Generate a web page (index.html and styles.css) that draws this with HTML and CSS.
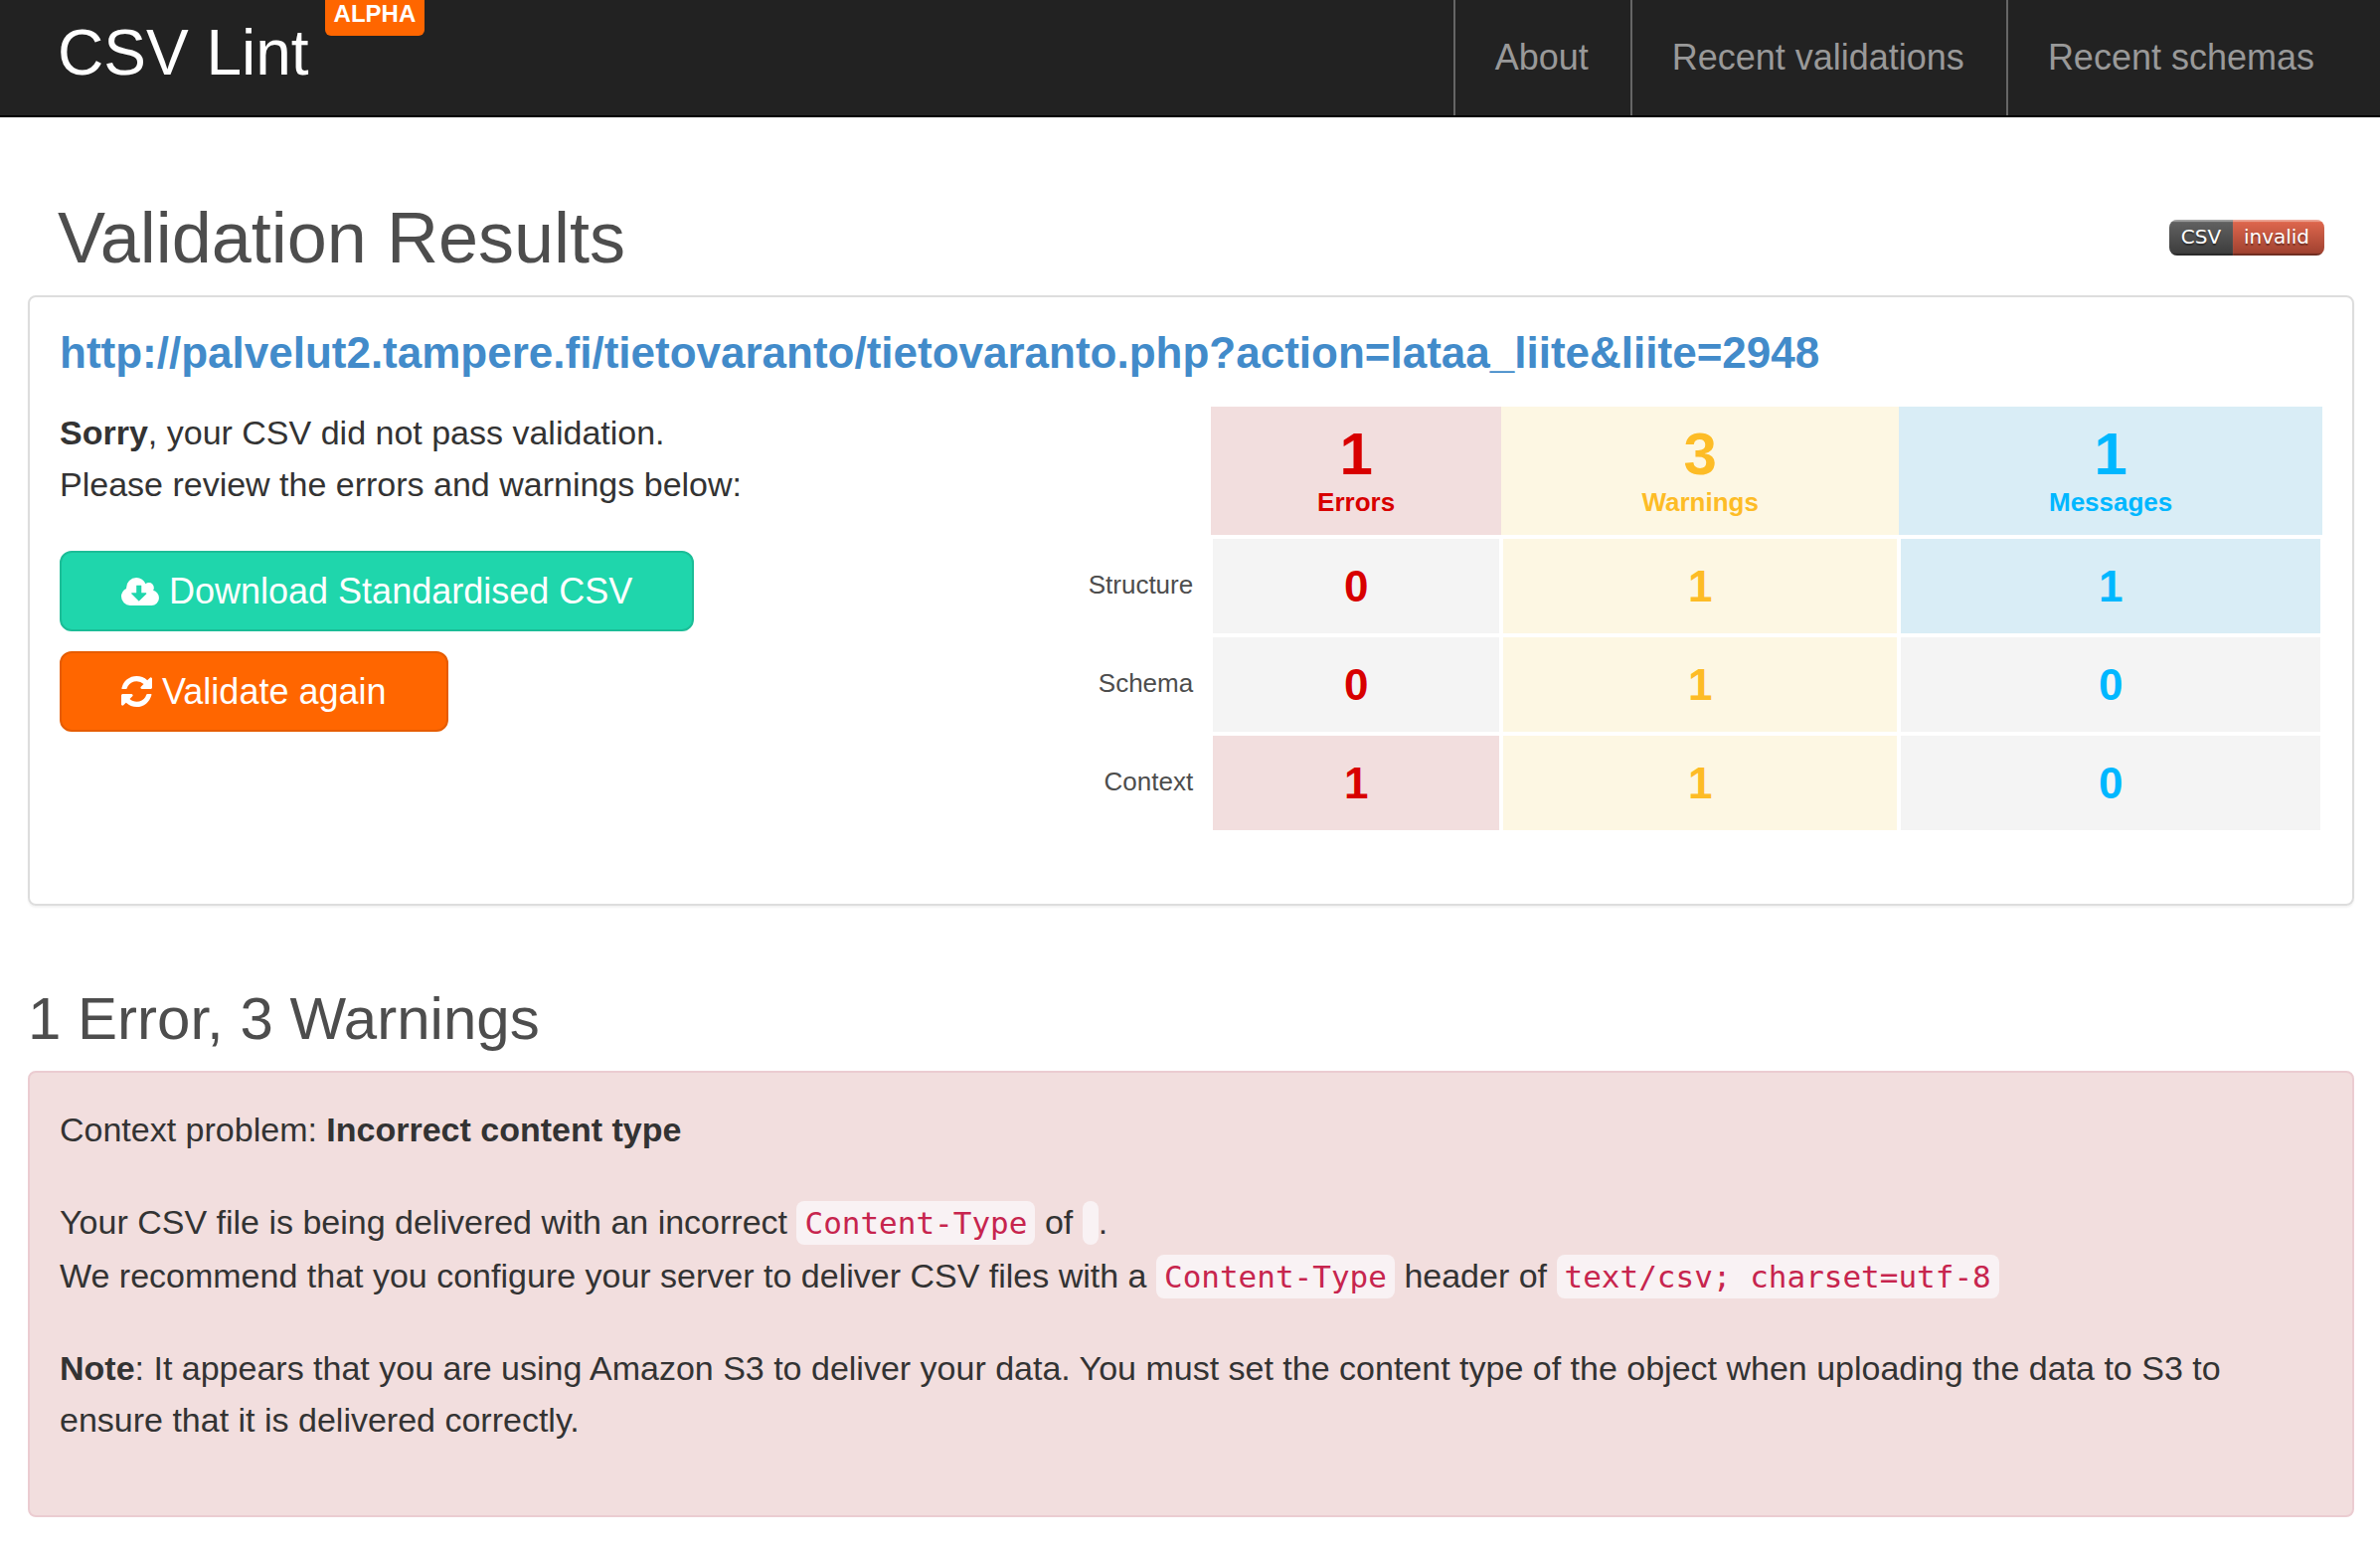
FILE: index.html
```html
<!DOCTYPE html>
<html lang="en">
<head>
<meta charset="utf-8">
<title>CSV Lint - Validation Results</title>
<link rel="stylesheet" href="styles.css">
</head>
<body>
<header class="navbar">
  <div class="brand">
    <a class="brand-name" href="#">CSV Lint</a>
    <span class="brand-tag">ALPHA</span>
  </div>
  <nav class="nav">
    <a class="nav-link" href="#">About</a>
    <a class="nav-link" href="#">Recent validations</a>
    <a class="nav-link" href="#">Recent schemas</a>
  </nav>
</header>

<main class="container">
  <div class="page-head">
    <h1 class="page-title">Validation Results</h1>
    <a class="status" href="#"><span class="status-key">CSV</span><span class="status-value">invalid</span></a>
  </div>

  <section class="panel">
    <h2 class="source"><a href="#">http://palvelut2.tampere.fi/tietovaranto/tietovaranto.php?action=lataa_liite&amp;liite=2948</a></h2>
    <div class="overview">
      <div>
        <p class="text"><strong>Sorry</strong>, your CSV did not pass validation.<br>Please review the errors and warnings below:</p>
        <div class="actions">
          <button class="btn btn-download" type="button">
            <svg class="icon-cloud" viewBox="0 0 1920 1408" aria-hidden="true"><path transform="matrix(1 0 0 -1 0 1408)" d="M1280 608q0 14 -9 23t-23 9h-224v352q0 13 -9.5 22.5t-22.5 9.5h-192q-13 0 -22.5 -9.5t-9.5 -22.5v-352h-224q-13 0 -22.5 -9.5t-9.5 -22.5q0 -14 9 -23l352 -352q9 -9 23 -9t23 9l351 351q10 12 10 24zM1920 384q0 -159 -112.5 -271.5t-271.5 -112.5h-1088q-185 0 -316.5 131.5t-131.5 316.5q0 130 70 240t188 165q-2 30 -2 43q0 212 150 362t362 150q156 0 283.5 -87t185.5 -229q70 63 166 63q106 0 181 -75t75 -181q0 -76 -41 -138q129 -30 213 -134.5t84 -242.5z"/></svg>
            Download Standardised CSV
          </button>
          <button class="btn btn-again" type="button">
            <svg class="icon-refresh" viewBox="128 128 1536 1536" aria-hidden="true"><path d="M1639 1056q0 5-1 7-64 268-268 434.500t-478 166.500q-146 0-282.500-55t-243.500-157l-129 129q-19 19-45 19t-45-19-19-45v-448q0-26 19-45t45-19h448q26 0 45 19t19 45-19 45l-137 137q71 66 161 102t187 36q134 0 250-65t186-179q11-17 53-117 8-23 30-23h192q13 0 22.500 9.500t9.500 22.500zm25-800v448q0 26-19 45t-45 19h-448q-26 0-45-19t-19-45 19-45l138-138q-148-137-349-137-134 0-250 65t-186 179q-11 17-53 117-8 23-30 23h-199q-13 0-22.500-9.500t-9.500-22.500v-7q65-268 270-434.500t480-166.500q146 0 284 55.500t245 156.500l130-129q19-19 45-19t45 19 19 45z"/></svg>
            Validate again
          </button>
        </div>
      </div>
      <table class="summary">
        <colgroup>
          <col class="col-label"><col class="col-errors"><col class="col-warnings"><col class="col-messages">
        </colgroup>
        <thead>
          <tr>
            <td></td>
            <th class="errors hit" scope="col"><span class="total">1</span>Errors</th>
            <th class="warnings hit" scope="col"><span class="total">3</span>Warnings</th>
            <th class="messages hit" scope="col"><span class="total">1</span>Messages</th>
          </tr>
        </thead>
        <tbody>
          <tr>
            <th scope="row">Structure</th>
            <td class="errors">0</td>
            <td class="warnings hit">1</td>
            <td class="messages hit">1</td>
          </tr>
          <tr>
            <th scope="row">Schema</th>
            <td class="errors">0</td>
            <td class="warnings hit">1</td>
            <td class="messages">0</td>
          </tr>
          <tr>
            <th scope="row">Context</th>
            <td class="errors hit">1</td>
            <td class="warnings hit">1</td>
            <td class="messages">0</td>
          </tr>
        </tbody>
      </table>
    </div>
  </section>

  <h2 class="section-title">1 Error, 3 Warnings</h2>

  <section class="alert">
    <p class="text">Context problem: <strong>Incorrect content type</strong></p>
    <p class="text text-code">Your CSV file is being delivered with an incorrect <code>Content-Type</code> of <code></code>.<br>We recommend that you configure your server to deliver CSV files with a <code>Content-Type</code> header of <code>text/csv; charset=utf-8</code></p>
    <p class="text"><strong>Note</strong>: It appears that you are using Amazon S3 to deliver your data. You must set the content type of the object when uploading the data to S3 to ensure that it is delivered correctly.</p>
  </section>
</main>
</body>
</html>
```
FILE: styles.css
```css
* {
  box-sizing: border-box;
}

body {
  margin: 0;
  background: #fff;
  color: #333;
  font-family: "Liberation Sans", Arial, sans-serif;
  font-size: 34px;
  line-height: 52px;
}

h1, h2, p {
  margin: 0;
}

a {
  text-decoration: none;
}

/* Top bar */
.navbar {
  display: flex;
  justify-content: space-between;
  padding: 0 24px 0 58px;
  background: #222;
  border-bottom: 2px solid #000;
}

.brand {
  display: flex;
  align-items: flex-start;
  gap: 16px;
}

.brand-name {
  color: #fff;
  font-size: 64px;
  line-height: 106px;
}

.brand-tag {
  padding: 0 9px 8px;
  border-radius: 0 0 6px 6px;
  background: #f60;
  color: #fff;
  font-size: 24px;
  font-weight: bold;
  line-height: 28px;
}

.nav {
  display: flex;
}

.nav-link {
  padding: 0 42px 0 40px;
  border-left: 2px solid #666;
  color: #999;
  font-size: 36px;
  line-height: 116px;
}

.container {
  padding: 81px 26px 32px 28px;
}

.page-head {
  display: flex;
  align-items: center;
  justify-content: space-between;
  padding: 0 30px;
}

.page-title {
  color: #4d4d4d;
  font-size: 72px;
  font-weight: normal;
  line-height: 80px;
}

/* CSV status badge */
.status {
  display: flex;
  overflow: hidden;
  border-radius: 8px;
  color: #fff;
  font-family: "DejaVu Sans", Verdana, sans-serif;
  font-size: 20px;
  line-height: 34px;
  text-align: center;
  text-shadow: 0 2px 1px rgba(0, 0, 0, 0.35);
}

.status-key,
.status-value {
  padding-bottom: 2px;
  box-shadow: inset 0 2px 1px rgba(255, 255, 255, 0.4), inset 0 -2px 1px rgba(0, 0, 0, 0.3);
}

.status-key {
  width: 64px;
  background: linear-gradient(#636363, #3b3b3b);
}

.status-value {
  width: 92px;
  padding-right: 4px;
  background: linear-gradient(#e2694f, #9c3f2e);
}

/* Result panel */
.panel {
  margin-top: 18px;
  padding: 32px 30px 72px;
  border: 2px solid #ddd;
  border-radius: 8px;
  box-shadow: 0 2px 2px rgba(0, 0, 0, 0.05);
}

.source {
  margin-bottom: 30px;
  font-size: 44px;
  line-height: 48px;
}

.source a {
  color: #428bca;
}

.overview {
  display: grid;
  grid-template-columns: 44fr 56fr;
  align-items: start;
}

.actions {
  display: flex;
  flex-direction: column;
  align-items: flex-start;
  gap: 20px;
  margin-top: 41px;
}

.btn {
  display: flex;
  align-items: center;
  gap: 10px;
  padding: 18px 60px;
  border: 2px solid;
  border-radius: 12px;
  color: #fff;
  font-family: inherit;
  font-size: 36px;
  line-height: 41px;
}

.btn svg {
  fill: currentColor;
}

.btn-download {
  border-color: #1bbd97;
  background: #1fd6ac;
}

.btn-again {
  border-color: #e65c00;
  background: #f60;
}

.icon-cloud {
  width: 38px;
  height: 28px;
}

.icon-refresh {
  width: 31px;
  height: 31px;
}

/* Summary table */
.summary {
  width: 100%;
  border-collapse: separate;
  border-spacing: 0;
  table-layout: fixed;
}

.col-label { width: 12.3%; }
.col-errors { width: 22.9%; }
.col-warnings { width: 31.4%; }
.col-messages { width: 33.4%; }

.summary th,
.summary td {
  padding: 0;
  text-align: center;
}

.summary thead th {
  height: 131px;
  padding-bottom: 2px;
  border-bottom: 2px solid #fff;
  font-size: 26px;
  line-height: 32px;
}

.total {
  display: block;
  font-size: 60px;
  line-height: 64px;
}

.summary tbody td {
  height: 99px;
  padding-top: 1px;
  border: 2px solid #fff;
  background: #f4f4f4;
  font-size: 44px;
  font-weight: bold;
}

.summary tbody th {
  padding: 0 18px 4px 0;
  color: #4d4d4d;
  font-size: 26px;
  font-weight: normal;
  line-height: 32px;
  text-align: right;
}

.errors { color: #d80000; }
.warnings { color: #fdbc26; }
.messages { color: #00b7ff; }

.summary .errors.hit { background: #f2dede; }
.summary .warnings.hit { background: #fdf7e3; }
.summary .messages.hit { background: #d9edf6; }

/* Problem list */
.section-title {
  margin: 81px 0 19px;
  color: #4d4d4d;
  font-size: 60px;
  font-weight: normal;
  line-height: 66px;
}

.alert {
  display: flex;
  flex-direction: column;
  gap: 40px;
  padding: 31px 30px 70px;
  border: 2px solid #ebccd1;
  border-radius: 8px;
  background: #f2dede;
}

.text-code {
  line-height: 54px;
}

code {
  padding: 4px 8px;
  border-radius: 8px;
  background: #f9f2f4;
  color: #c7254e;
  font-family: "DejaVu Sans Mono", Menlo, monospace;
  font-size: 31px;
  line-height: 40px;
}
```
